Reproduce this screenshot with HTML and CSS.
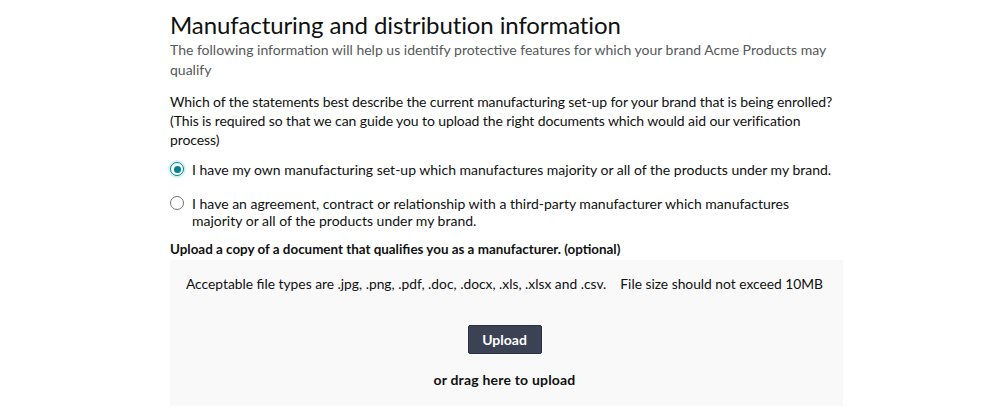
FILE: index.html
```html
<!DOCTYPE html>
<html lang="en">
<head>
<meta charset="utf-8">
<title>Manufacturing and distribution information</title>
<link rel="stylesheet" href="styles.css">
</head>
<body>
<main class="page">
  <h1 class="title">Manufacturing and distribution information</h1>
  <p class="subtitle">The following information will help us identify protective features for which your brand Acme Products may qualify</p>
  <p class="question">Which of the statements best describe the current manufacturing set-up for your brand that is being enrolled? (This is required so that we can guide you to upload the right documents which would aid our verification process)</p>
  <div class="options">
    <label class="option">
      <span class="radio checked"></span>
      <span class="option-text">I have my own manufacturing set-up which manufactures majority or all of the products under my brand.</span>
    </label>
    <label class="option">
      <span class="radio"></span>
      <span class="option-text">I have an agreement, contract or relationship with a third-party manufacturer which manufactures majority or all of the products under my brand.</span>
    </label>
  </div>
  <p class="upload-label">Upload a copy of a document that qualifies you as a manufacturer. (optional)</p>
  <section class="dropzone">
    <p class="filetypes">Acceptable file types are .jpg, .png, .pdf, .doc, .docx, .xls, .xlsx and .csv.<span class="gap"></span>File size should not exceed 10MB</p>
    <button class="upload-btn" type="button">Upload</button>
    <p class="drag">or drag here to upload</p>
  </section>
</main>
</body>
</html>
```
FILE: styles.css
```css
html, body {
  margin: 0;
  padding: 0;
  background: #ffffff;
}
body {
  font-family: "Lato", "Liberation Sans", Arial, sans-serif;
  color: #0f1111;
}
.page {
  margin-left: 170px;
  width: 673px;
  padding-top: 9px;
}
.title {
  margin: 0;
  font-size: 24px;
  line-height: 32px;
  font-weight: 400;
  letter-spacing: -0.1px;
  color: #0f1111;
}
.subtitle {
  margin: -1px 0 0;
  font-size: 14px;
  line-height: 20px;
  color: #565959;
}
.question {
  margin: 12px 0 0;
  font-size: 14px;
  line-height: 19px;
  letter-spacing: -0.1px;
  color: #0f1111;
}
.options {
  margin-top: 12px;
  width: 662px;
  display: flex;
  flex-direction: column;
  gap: 17px;
}
.option {
  display: flex;
  align-items: flex-start;
  gap: 8px;
  font-size: 14px;
  line-height: 17px;
}
.radio {
  flex: none;
  width: 14px;
  height: 14px;
  border: 1px solid #6f7373;
  border-radius: 50%;
  box-sizing: border-box;
  margin-top: 1px;
  position: relative;
  background: #fff;
}
.radio.checked {
  border-color: #008296;
  box-shadow: 0 0 0 2px #d5f1f5;
}
.radio.checked::after {
  content: "";
  position: absolute;
  left: 2.5px;
  top: 2.5px;
  width: 7px;
  height: 7px;
  border-radius: 50%;
  background: #008296;
}
.upload-label {
  margin: 11px 0 0;
  font-size: 13.4px;
  line-height: 18px;
  font-weight: 700;
}
.dropzone {
  margin-top: 2px;
  background: #f9f9f9;
  height: 146px;
  box-sizing: border-box;
  padding: 14px 4px 0 0;
  display: flex;
  flex-direction: column;
  align-items: center;
}
.filetypes {
  margin: 0;
  font-size: 13.8px;
  line-height: 20px;
}
.gap {
  display: inline-block;
  width: 14px;
}
.upload-btn {
  margin-top: 31px;
  width: 74px;
  height: 29px;
  border: 1px solid #2b3140;
  border-radius: 2px;
  background: #3b4254;
  color: #ffffff;
  font-family: inherit;
  font-size: 14px;
  font-weight: 700;
  padding: 0;
}
.drag {
  margin: 17px 0 0;
  font-size: 14px;
  line-height: 18px;
  letter-spacing: 0.2px;
  font-weight: 700;
}
```
